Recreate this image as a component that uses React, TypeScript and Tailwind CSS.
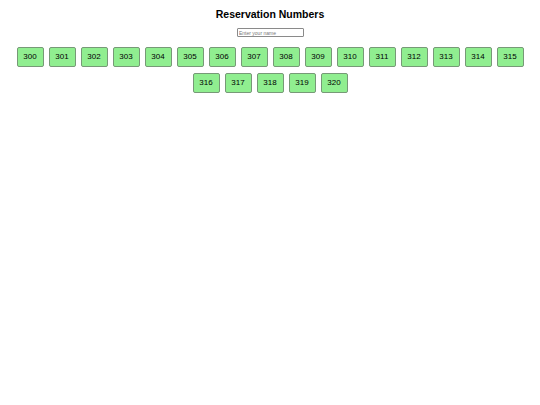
import { useState } from 'react'

const numbers = Array.from({ length: 21 }, (_, i) => 300 + i)

export default function App() {
  const [name, setName] = useState('')
  const [picked, setPicked] = useState<number | null>(null)

  return (
    <div className="min-h-[405px] bg-white font-['Liberation_Sans',Arial,sans-serif] text-black">
      <h1 className="pt-[8px] text-center text-[10.5px] font-bold leading-[13px]">Reservation Numbers</h1>
      <div className="mt-[7px] flex justify-center">
        <input
          className="h-[9px] w-[67px] rounded-[1px] border-[0.5px] border-[#8a8a8a] px-[1.5px] text-[5px] leading-[8px] placeholder:text-[#777]"
          placeholder="Enter your name"
          value={name}
          onChange={(e) => setName(e.target.value)}
        />
      </div>
      <div className="mx-auto mt-[10px] flex w-[514px] flex-wrap justify-center gap-x-[5px] gap-y-[6px]">
        {numbers.map((n) => (
          <button
            key={n}
            onClick={() => setPicked(n)}
            className={`h-[20px] w-[27px] rounded-[2px] border border-[#779977] text-[8px] ${picked === n ? 'bg-[#f08080]' : 'bg-[#90ee90]'}`}
          >
            {n}
          </button>
        ))}
      </div>
    </div>
  )
}
